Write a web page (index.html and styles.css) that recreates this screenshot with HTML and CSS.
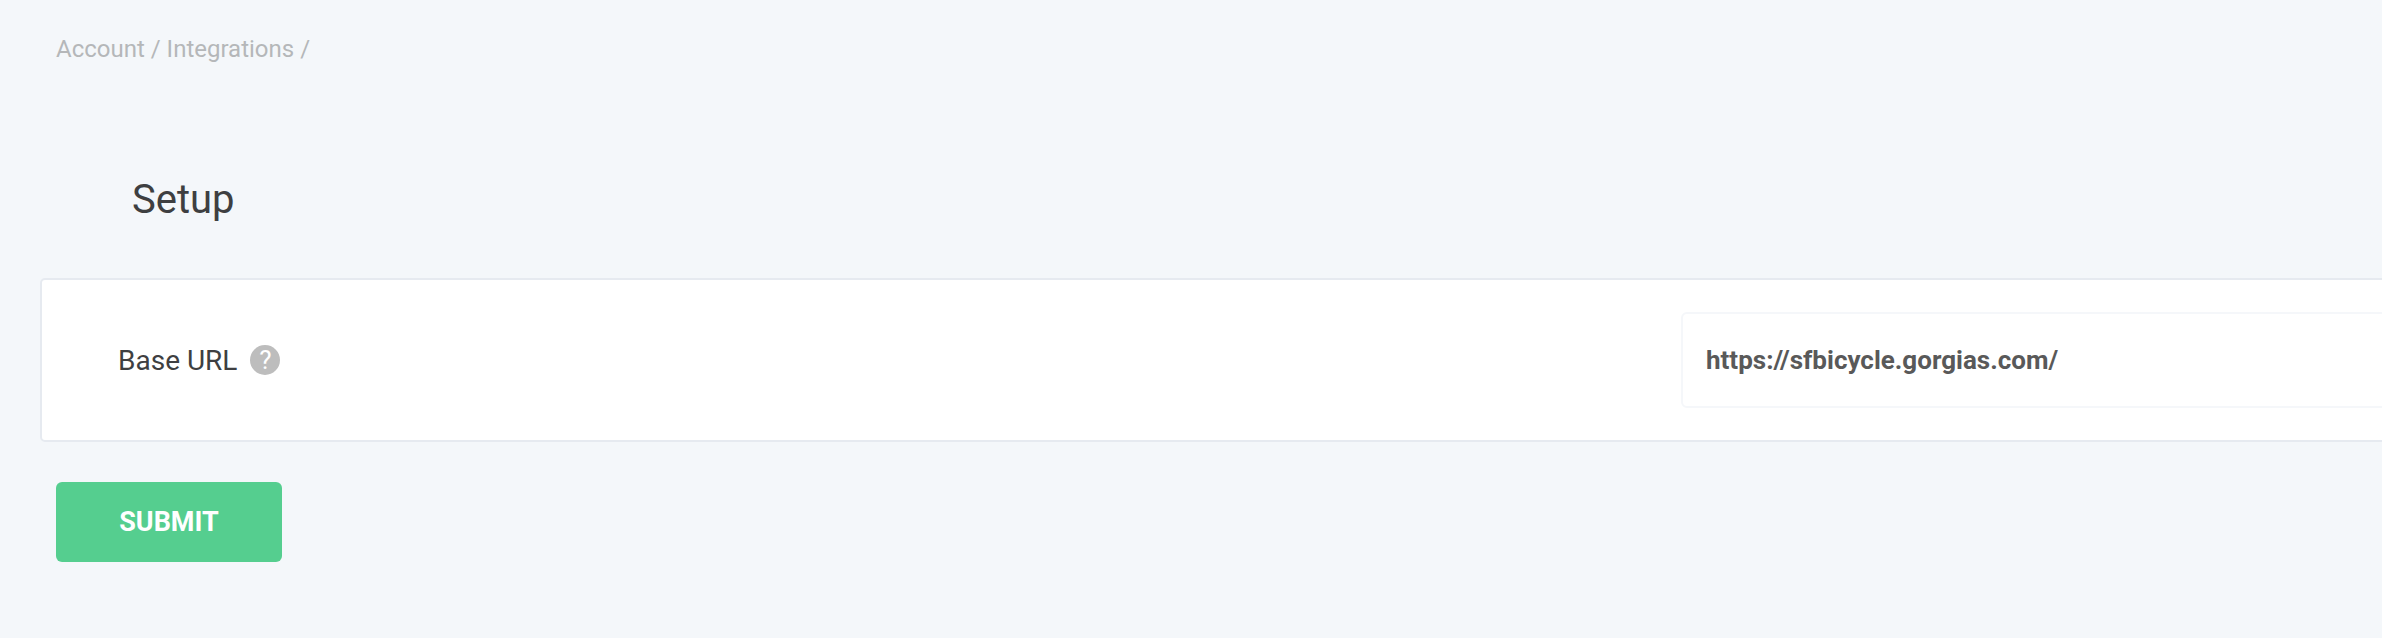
FILE: index.html
```html
<!DOCTYPE html>
<html lang="en">
<head>
    <meta charset="UTF-8">
    <title>Setup</title>
    <link rel="stylesheet" href="styles.css">
</head>
<body>
    <div class="breadcrumb">Account / Integrations /</div>
    <h1>Setup</h1>
    <form class="setup-form">
        <div class="card">
            <div class="field-label">
                <label for="baseUrl">Base URL</label>
                <span class="help-icon">?</span>
            </div>
            <div class="url-input" id="baseUrl">https://sfbicycle.gorgias.com/</div>
        </div>
        <button type="button" class="submit-button">SUBMIT</button>
    </form>
</body>
</html>
```

FILE: styles.css
```css
html, body {
    overflow: hidden;
}

body {
    font-family: Roboto, Arial, sans-serif;
    background-color: #f4f7fa;
    color: #3e3f41;
    margin: 0;
    width: 2382px;
    height: 638px;
}

.breadcrumb {
    color: #b5b7b9;
    font-size: 24px;
    line-height: 32px;
    padding: 33px 0 0 56px;
}

h1 {
    font-size: 40px;
    font-weight: 400;
    line-height: 48px;
    margin: 0;
    padding: 111px 0 0 132px;
}

.setup-form {
    padding: 54px 0 0 40px;
}

.card {
    box-sizing: border-box;
    display: flex;
    justify-content: space-between;
    align-items: center;
    width: 2400px;
    height: 164px;
    background-color: white;
    border: 2px solid #e6eaf0;
    border-radius: 5px;
    padding: 0 0 0 76px;
}

.field-label {
    display: flex;
    align-items: center;
    gap: 13px;
    font-size: 28px;
}

.help-icon {
    width: 30px;
    height: 30px;
    border-radius: 50%;
    background-color: #bdbdbd;
    color: white;
    font-size: 26px;
    line-height: 30px;
    text-align: center;
}

.url-input {
    box-sizing: border-box;
    width: 757px;
    height: 96px;
    border: 2px solid #f5f7fa;
    border-radius: 6px;
    color: #595959;
    font-size: 26px;
    font-weight: 700;
    line-height: 92px;
    padding-left: 23px;
}

.submit-button {
    display: block;
    width: 226px;
    height: 80px;
    margin: 40px 0 0 16px;
    background-color: #55ce8f;
    border: none;
    border-radius: 6px;
    color: white;
    font-family: Roboto, Arial, sans-serif;
    font-size: 27px;
    font-weight: 700;
}
```
